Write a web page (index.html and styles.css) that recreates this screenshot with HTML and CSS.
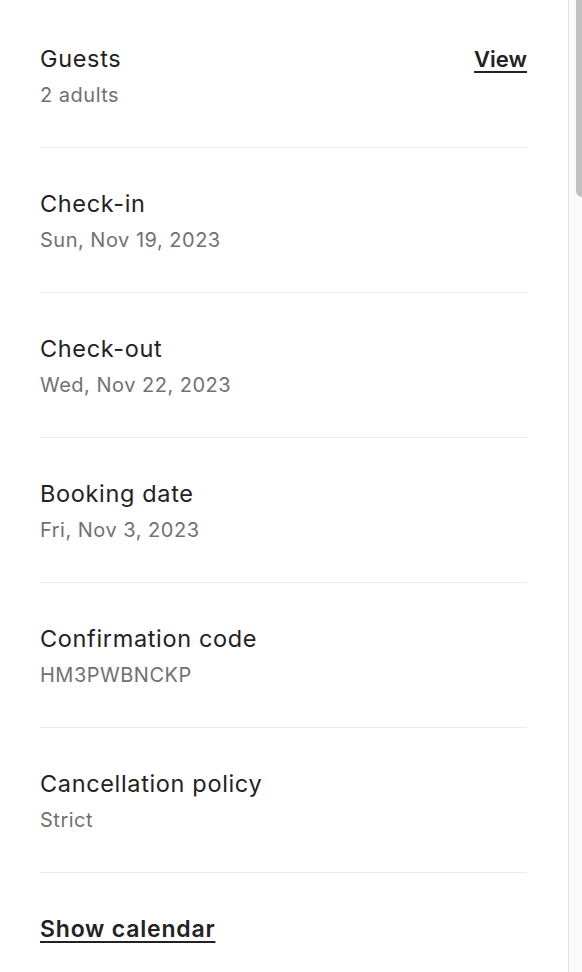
FILE: index.html
```html
<!DOCTYPE html>
<html>
	<head>
		<meta http-equiv="Content-Type" content="text/html;charset=UTF-8" />
		<title>Reservation details</title>
		<link rel="stylesheet" href="styles.css">
	</head>
	<body>

		<div id="page">

			<div id="content">

				<ul class="details">
					<li class="row">
						<div class="row-text">
							<div class="label">Guests</div>
							<div class="value">2 adults</div>
						</div>
						<a class="link link-small" href="#">View</a>
					</li>
					<li class="row">
						<div class="row-text">
							<div class="label">Check-in</div>
							<div class="value">Sun, Nov 19, 2023</div>
						</div>
					</li>
					<li class="row">
						<div class="row-text">
							<div class="label">Check-out</div>
							<div class="value">Wed, Nov 22, 2023</div>
						</div>
					</li>
					<li class="row">
						<div class="row-text">
							<div class="label">Booking date</div>
							<div class="value">Fri, Nov 3, 2023</div>
						</div>
					</li>
					<li class="row">
						<div class="row-text">
							<div class="label">Confirmation code</div>
							<div class="value">HM3PWBNCKP</div>
						</div>
					</li>
					<li class="row">
						<div class="row-text">
							<div class="label">Cancellation policy</div>
							<div class="value">Strict</div>
						</div>
					</li>
				</ul>

				<div class="footer">
					<a class="link" href="#">Show calendar</a>
				</div>

			</div>

			<div id="scrollbar">
				<div class="thumb"></div>
			</div>

		</div>

	</body>
</html>
```

FILE: styles.css
```css
html, body {
	height: 100%;
}

body {
	margin: 0;
	background: #FFF;
	color: #222;
	font-family: Inter, "Noto Sans", sans-serif;
}

#page {
	display: flex;
	height: 100%;
	overflow: hidden;
}

#content {
	flex: 1;
	padding: 3px 41px 0 40px;
}

.details {
	list-style: none;
	margin: 0;
	padding: 0;
}

.row {
	display: flex;
	align-items: flex-start;
	justify-content: space-between;
	border-bottom: 1px solid #EBEBEB;
	padding: 42px 0 38px;
}

.label {
	font-size: 23.5px;
	letter-spacing: 0.65px;
	line-height: 28px;
	margin-bottom: 8px;
}

.value {
	color: #717171;
	font-size: 20px;
	letter-spacing: 0.5px;
	line-height: 28px;
}

.link {
	color: #222;
	font-size: 23px;
	font-weight: 600;
	letter-spacing: 0.8px;
	line-height: 28px;
	text-decoration: underline;
	text-decoration-thickness: 2px;
	text-underline-offset: 4px;
}

.link-small {
	font-size: 22px;
	letter-spacing: 0;
}

.footer {
	padding-top: 42px;
}

#scrollbar {
	width: 13px;
	border-left: 1px solid #E3E3E3;
	background: #FAFAFA;
	display: flex;
	justify-content: flex-end;
}

.thumb {
	width: 6px;
	height: 197px;
	background: #C1C1C1;
	border-radius: 0 0 0 6px;
}
```
